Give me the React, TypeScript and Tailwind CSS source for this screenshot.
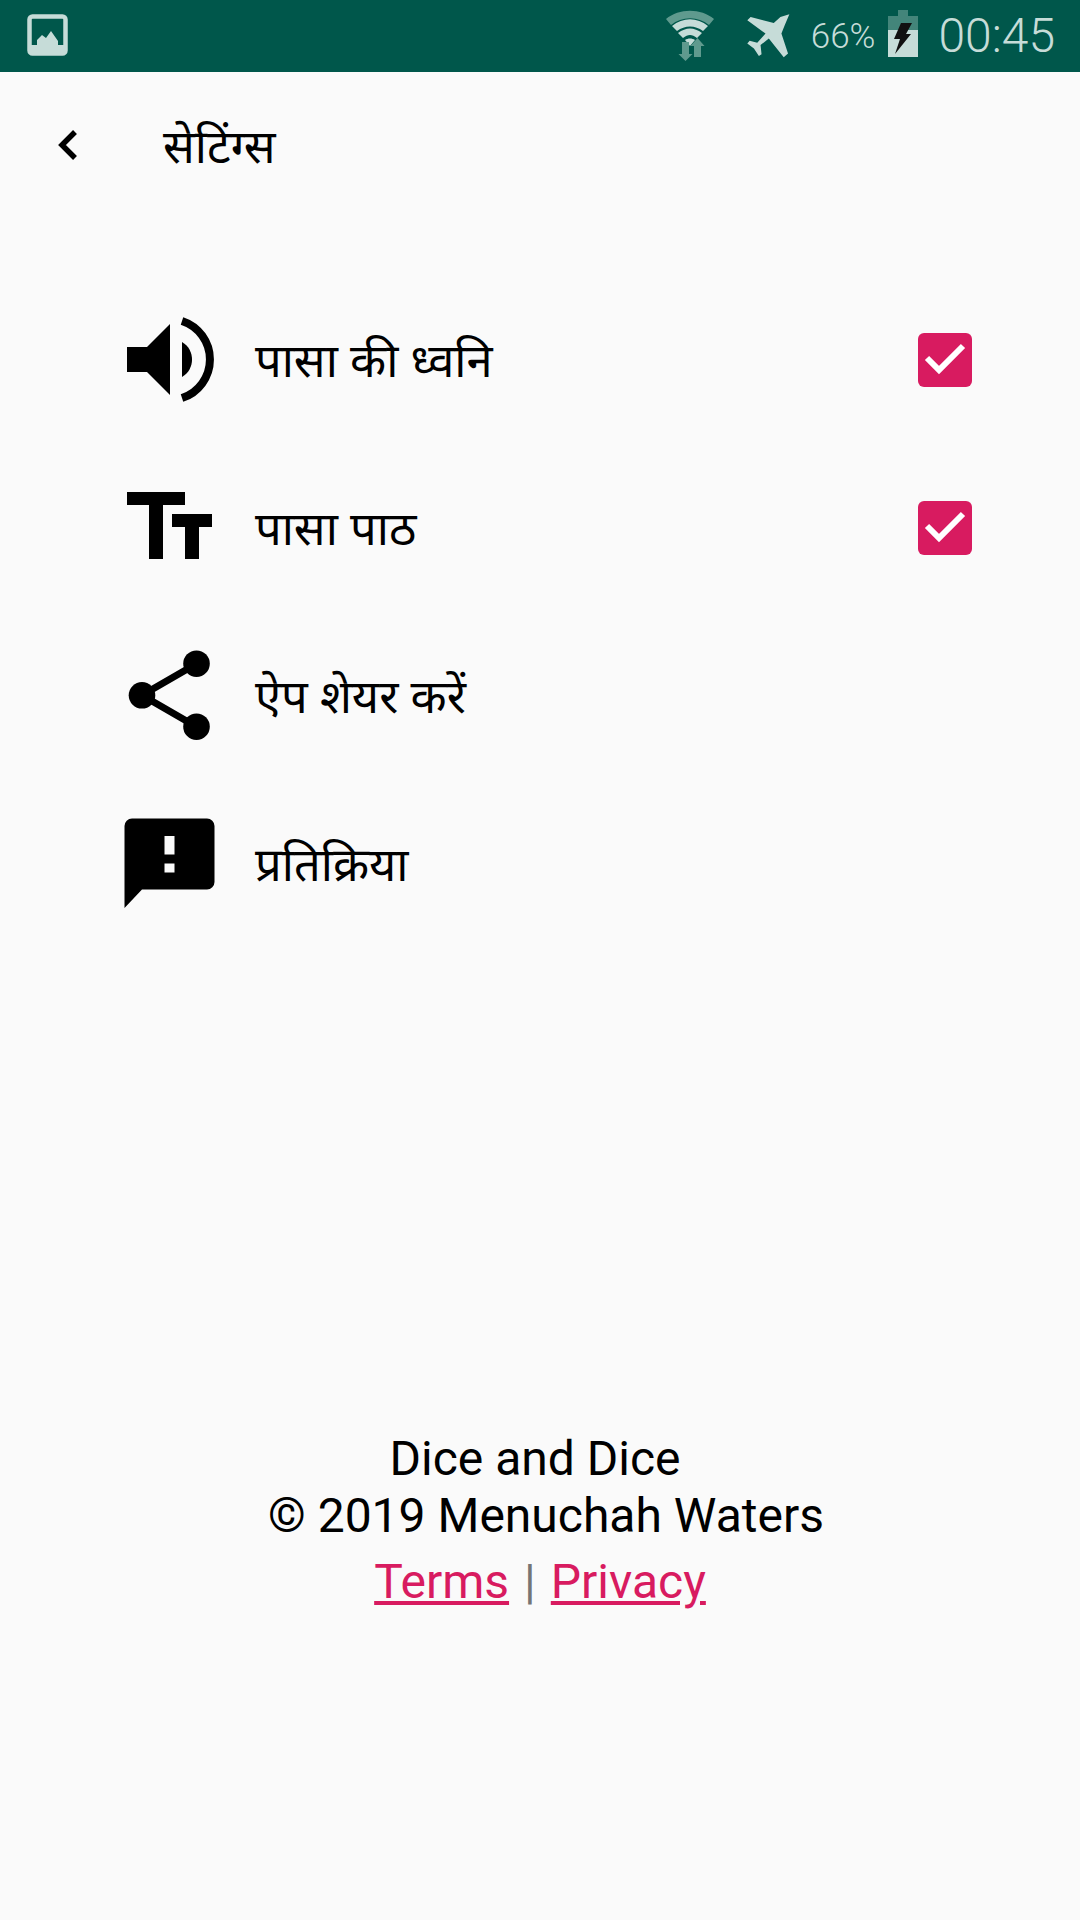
import React from "react";

const hindi = { fontFamily: '"Noto Sans Devanagari", "Noto Sans", "Lohit Devanagari", Roboto, sans-serif' };

function StatusBar() {
  return (
    <div className="h-[72px] bg-[#00574b] flex items-center text-[#c6dcd8] font-['Roboto',sans-serif]">
      <svg className="ml-[27px] mb-[2px]" width="41" height="42" viewBox="0 0 41 42">
        <rect x="2.500" y="2.500" width="36" height="37" rx="3" fill="none" stroke="#c6dcd8" strokeWidth="4.500" />
        <rect x="2" y="31" width="37" height="9" rx="2" fill="#c6dcd8" />
        <path d="M10 31V26L15 21L19 24L24 17L31 27V31Z" fill="#c6dcd8" />
      </svg>
      <svg className="ml-auto" width="52" height="62" viewBox="0 0 52 62">
        <path d="M2 14C15 3 37 3 50 14L45 20C34 11 18 11 7 20Z" fill="#5f9a8e" />
        <path d="M8 21C19 12 33 12 44 21L39 26C31 20 21 20 13 26Z" fill="#c6dcd8" />
        <path d="M14 28C22 22 30 22 38 28L33 33C28 29 24 29 19 33Z" fill="#c6dcd8" />
        <path d="M21 35C24 33 28 33 31 35L26 41Z" fill="#c6dcd8" />
        <path d="M18 37H25V49H28.500L21.500 56L14.500 49H18Z" fill="#5f9a8e" />
        <path d="M30 52V41H26.500L33.500 33L40.500 41H37V52Z" fill="#5f9a8e" />
      </svg>
      <svg className="ml-[28px]" width="48" height="48" viewBox="255 35 145 145">
        <path
          d="M392 42L378 75L368 100L388 160L375 172L330 115L305 135L308 163L300 168L285 145L265 130L272 122L295 128L320 100L265 60L275 50L345 68L365 50Z"
          fill="#c6dcd8"
        />
      </svg>
      <span className="ml-[19px] text-[35px] leading-none font-light">66%</span>
      <svg className="ml-[13px] mb-[5px]" width="30" height="47" viewBox="0 0 30 47">
        <path d="M10 0H20V6H30V20H0V6H10Z" fill="#43857a" />
        <rect x="0" y="20" width="30" height="27" fill="#c6dcd8" />
        <path d="M13 13H24L18 24H23L7 44L12 29H6Z" fill="#111" />
      </svg>
      <span className="ml-[20px] mr-[25px] text-[48px] leading-none font-light">00:45</span>
    </div>
  );
}

function SoundIcon() {
  return (
    <svg width="92" height="92" viewBox="124 314 92 92">
      <path d="M127 347H147L170 324V395L147 372H127Z" />
      <path d="M182 342C189 346 192 353 192 359.500C192 366 189 373 182 377Z" />
      <path d="M182 321A40.500 40.500 0 0 1 182 398" fill="none" stroke="#000" strokeWidth="8" />
    </svg>
  );
}

function TextIcon() {
  return (
    <svg width="92" height="92" viewBox="124 482 92 92">
      <path d="M127 492H185V505H163V559H149V505H127Z" />
      <path d="M172 514H212V527H199V559H185V527H172Z" />
    </svg>
  );
}

function ShareIcon() {
  return (
    <svg width="92" height="92" viewBox="124 650 92 92">
      <circle cx="196.500" cy="663.700" r="13.300" />
      <circle cx="142" cy="695.300" r="13.300" />
      <circle cx="196.500" cy="726.700" r="13.300" />
      <path d="M196.500 663.700L142 695.300L196.500 726.700" fill="none" stroke="#000" strokeWidth="7" />
    </svg>
  );
}

function FeedbackIcon() {
  return (
    <svg width="92" height="92" viewBox="124 818 92 92">
      <path d="M132 818.500H207A7.500 7.500 0 0 1 214.500 826V882A7.500 7.500 0 0 1 207 889.500H142L124.500 908V826A7.500 7.500 0 0 1 132 818.500Z" />
      <rect x="164.500" y="836" width="10" height="18.500" fill="#fafafa" />
      <rect x="164.500" y="863.500" width="10" height="9" fill="#fafafa" />
    </svg>
  );
}

function Checkbox() {
  return (
    <span className="w-[54px] h-[54px] rounded-[6px] bg-[#d81b60] flex items-center justify-center">
      <svg width="54" height="54" viewBox="0 0 54 54">
        <path d="M9 25L21 37L45 13" fill="none" stroke="#fff" strokeWidth="6" />
      </svg>
    </span>
  );
}

const rows = [
  { label: "पासा की ध्वनि", icon: <SoundIcon />, checked: true },
  { label: "पासा पाठ", icon: <TextIcon />, checked: true },
  { label: "ऐप शेयर करें", icon: <ShareIcon />, checked: false },
  { label: "प्रतिक्रिया", icon: <FeedbackIcon />, checked: false },
];

export default function App() {
  return (
    <div className="w-[1080px] h-[1920px] bg-[#fafafa] text-black overflow-hidden">
      <StatusBar />

      {/* Header */}
      <div className="h-[148px] flex items-center">
        <svg className="ml-[57px] mb-[2px]" width="22" height="32" viewBox="0 0 22 32">
          <path d="M18 3L5 16L18 29" fill="none" stroke="#000" strokeWidth="5.500" />
        </svg>
        <span className="ml-[84px] pt-[10px] text-[47px] leading-none" style={hindi}>सेटिंग्स</span>
      </div>

      {/* Settings list */}
      <div className="mt-[56px]">
        {rows.map((row) => (
          <div key={row.label} className="h-[168px] flex items-center pl-[124px] pr-[108px]">
            {row.icon}
            <span className="ml-[39px] pt-[10px] text-[47px] leading-none" style={hindi}>{row.label}</span>
            {row.checked && <span className="ml-auto"><Checkbox /></span>}
          </div>
        ))}
      </div>

      {/* Footer */}
      <div className="mt-[482px] flex flex-col items-center text-[48px] leading-[57px] font-['Roboto',sans-serif]">
        <div className="mr-[10px]">Dice and Dice</div>
        <div className="ml-[12px]">© 2019 Menuchah Waters</div>
        <div className="mt-[9px] flex items-center gap-[15px]">
          <a className="text-[#d81b60] underline">Terms</a>
          <span className="text-[#757575]">|</span>
          <a className="text-[#d81b60] underline">Privacy</a>
        </div>
      </div>
    </div>
  );
}
